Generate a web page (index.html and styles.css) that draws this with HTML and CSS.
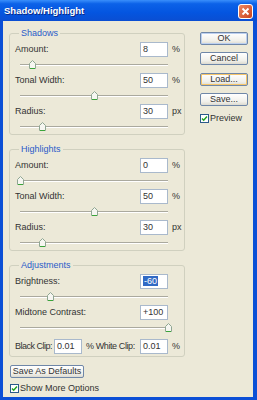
FILE: index.html
```html
<!DOCTYPE html>
<html lang="en">
<head>
    <meta charset="UTF-8">
    <title>Shadow/Highlight</title>
    <link rel="stylesheet" href="styles.css">
</head>
<body>
    <div class="window">
        <div class="titlebar">
            <span class="title">Shadow/Highlight</span>
            <span class="close">
                <svg width="15" height="15" viewBox="0 0 15 15">
                    <defs>
                        <linearGradient id="cg" x1="0" y1="0" x2="1" y2="1">
                            <stop offset="0" stop-color="#f08a62"/>
                            <stop offset="1" stop-color="#c8401c"/>
                        </linearGradient>
                    </defs>
                    <rect x="0.5" y="0.5" width="14" height="14" rx="2.5" fill="url(#cg)" stroke="#fff"/>
                    <path d="M4.5 4.5L10.5 10.5M10.5 4.5L4.5 10.5" stroke="#fff" stroke-width="1.8"/>
                </svg>
            </span>
        </div>

        <div class="dialog">
            <div class="main">
                <!-- Shadows -->
                <div class="group first">
                    <span class="group-title">Shadows</span>
                    <div class="row"><span class="label">Amount:</span><span class="field">8</span><span class="unit">%</span></div>
                    <div class="slider"><span class="track"></span><span class="thumb" style="left: 8%"><svg width="7" height="9" viewBox="0 0 7 9"><path d="M0.5 8.5V3.5L3.5 0.5L6.5 3.5V8.5Z" fill="#f6f6f1" stroke="#8fa692"/><path d="M1 8.5H6" stroke="#3aa53a"/></svg></span></div>
                    <div class="row"><span class="label">Tonal Width:</span><span class="field">50</span><span class="unit">%</span></div>
                    <div class="slider"><span class="track"></span><span class="thumb" style="left: 50%"><svg width="7" height="9" viewBox="0 0 7 9"><path d="M0.5 8.5V3.5L3.5 0.5L6.5 3.5V8.5Z" fill="#f6f6f1" stroke="#8fa692"/><path d="M1 8.5H6" stroke="#3aa53a"/></svg></span></div>
                    <div class="row"><span class="label">Radius:</span><span class="field">30</span><span class="unit">px</span></div>
                    <div class="slider"><span class="track"></span><span class="thumb" style="left: 15%"><svg width="7" height="9" viewBox="0 0 7 9"><path d="M0.5 8.5V3.5L3.5 0.5L6.5 3.5V8.5Z" fill="#f6f6f1" stroke="#8fa692"/><path d="M1 8.5H6" stroke="#3aa53a"/></svg></span></div>
                </div>

                <!-- Highlights -->
                <div class="group">
                    <span class="group-title">Highlights</span>
                    <div class="row"><span class="label">Amount:</span><span class="field">0</span><span class="unit">%</span></div>
                    <div class="slider"><span class="track"></span><span class="thumb" style="left: 0%"><svg width="7" height="9" viewBox="0 0 7 9"><path d="M0.5 8.5V3.5L3.5 0.5L6.5 3.5V8.5Z" fill="#f6f6f1" stroke="#8fa692"/><path d="M1 8.5H6" stroke="#3aa53a"/></svg></span></div>
                    <div class="row"><span class="label">Tonal Width:</span><span class="field">50</span><span class="unit">%</span></div>
                    <div class="slider"><span class="track"></span><span class="thumb" style="left: 50%"><svg width="7" height="9" viewBox="0 0 7 9"><path d="M0.5 8.5V3.5L3.5 0.5L6.5 3.5V8.5Z" fill="#f6f6f1" stroke="#8fa692"/><path d="M1 8.5H6" stroke="#3aa53a"/></svg></span></div>
                    <div class="row"><span class="label">Radius:</span><span class="field">30</span><span class="unit">px</span></div>
                    <div class="slider"><span class="track"></span><span class="thumb" style="left: 15%"><svg width="7" height="9" viewBox="0 0 7 9"><path d="M0.5 8.5V3.5L3.5 0.5L6.5 3.5V8.5Z" fill="#f6f6f1" stroke="#8fa692"/><path d="M1 8.5H6" stroke="#3aa53a"/></svg></span></div>
                </div>

                <!-- Adjustments -->
                <div class="group adjust">
                    <span class="group-title">Adjustments</span>
                    <div class="row"><span class="label">Brightness:</span><span class="field"><span class="selected">-60</span></span><span class="unit"></span></div>
                    <div class="slider"><span class="track"></span><span class="thumb" style="left: 20%"><svg width="7" height="9" viewBox="0 0 7 9"><path d="M0.5 8.5V3.5L3.5 0.5L6.5 3.5V8.5Z" fill="#f6f6f1" stroke="#8fa692"/><path d="M1 8.5H6" stroke="#3aa53a"/></svg></span></div>
                    <div class="row"><span class="label">Midtone Contrast:</span><span class="field">+100</span><span class="unit"></span></div>
                    <div class="slider"><span class="track"></span><span class="thumb" style="left: 100%"><svg width="7" height="9" viewBox="0 0 7 9"><path d="M0.5 8.5V3.5L3.5 0.5L6.5 3.5V8.5Z" fill="#f6f6f1" stroke="#8fa692"/><path d="M1 8.5H6" stroke="#3aa53a"/></svg></span></div>
                    <div class="row clip">
                        <span class="clip-label">Black Clip:</span><span class="field">0.01</span>
                        <span class="clip-mid">% White Clip:</span><span class="field">0.01</span><span class="unit">%</span>
                    </div>
                </div>

                <div class="btn defaults">Save As Defaults</div>
                <div class="check-row">
                    <span class="checkbox"><svg width="9" height="9" viewBox="0 0 9 9"><rect x="0.5" y="0.5" width="8" height="8" fill="#fff" stroke="#2b5a8a"/><path d="M2 4.5L3.7 6.2L7 2.6" fill="none" stroke="#21a121" stroke-width="1.5"/></svg></span>
                    <span>Show More Options</span>
                </div>
            </div>

            <div class="side">
                <div class="btn default">OK</div>
                <div class="btn cancel">Cancel</div>
                <div class="btn hot">Load...</div>
                <div class="btn">Save...</div>
                <div class="check-row preview">
                    <span class="checkbox"><svg width="9" height="9" viewBox="0 0 9 9"><rect x="0.5" y="0.5" width="8" height="8" fill="#fff" stroke="#2b5a8a"/><path d="M2 4.5L3.7 6.2L7 2.6" fill="none" stroke="#21a121" stroke-width="1.5"/></svg></span>
                    <span>Preview</span>
                </div>
            </div>
        </div>
    </div>
</body>
</html>
```

FILE: styles.css
```css
body {
    margin: 0;
    font-family: "Liberation Sans", Arial, sans-serif;
    font-size: 9px;
    color: #333;
}
.window {
    width: 257px;
    height: 400px;
    display: flex;
    flex-direction: column;
    background: #0b4fd6; /* XP blue frame */
}
.titlebar {
    height: 21px;
    flex: none;
    display: flex;
    align-items: center;
    justify-content: space-between;
    padding: 0 4px;
    background: linear-gradient(#3a8ffb 0%, #0c62e8 18%, #0455e0 60%, #0a4ed2 100%);
}
.title {
    color: #fff;
    font-weight: bold;
    font-size: 9.5px;
    text-shadow: 1px 1px 0 #0b2a86;
}
.close {
    display: flex;
    margin-top: 1px;
}
.dialog {
    flex: 1;
    display: flex;
    margin: 0 4px 3px 3px;
    background: #ece9d8; /* dialog face */
}
.main {
    width: 176px;
    margin-left: 6px;
}
.side {
    width: 48px;
    margin-left: 15px;
    padding-top: 11px;
}

/* group boxes */
.group {
    position: relative;
    border: 1px solid #d0d0bf;
    border-radius: 3px;
    padding: 7px 0 0 5px;
    margin-top: 14px;
}
.group.first {
    margin-top: 12px;
}
.group.adjust {
    padding-bottom: 2px;
}
.group-title {
    position: absolute;
    top: -6px;
    left: 9px;
    padding: 0 2px;
    line-height: 11px;
    background: #ece9d8;
    color: #2a5bc8;
}

.row {
    height: 16px;
    display: flex;
    align-items: center;
}
.label {
    flex: 1;
}
.field {
    width: 28px;
    height: 15px;
    box-sizing: border-box;
    border: 1px solid #a9b9cc;
    background: #fff;
    padding-left: 2px;
    line-height: 13px;
    white-space: nowrap;
}
.selected {
    background: #316ac5;
    color: #fff;
    padding: 0 1px;
}
.unit {
    width: 16px;
    padding-left: 4px;
    box-sizing: border-box;
}
.row.clip {
    margin-top: 3px;
}
.clip-label {
    width: 39px;
    letter-spacing: -0.5px;
    white-space: nowrap;
}
.clip-mid {
    width: 58px;
    padding-left: 4px;
    box-sizing: border-box;
    letter-spacing: -0.4px;
    white-space: nowrap;
}

/* sliders */
.slider {
    position: relative;
    height: 15px;
    margin: 0 16px 0 5px;
}
.track {
    position: absolute;
    left: 0;
    right: 0;
    top: 7px;
    height: 1px;
    background: #aaa99e;
    border-bottom: 1px solid #fff;
}
.thumb {
    position: absolute;
    top: 3px;
    width: 7px;
    height: 9px;
    margin-left: -3px;
    display: flex;
}

/* buttons */
.btn {
    height: 13px;
    box-sizing: border-box;
    border: 1px solid #6f87a8;
    border-radius: 2px;
    background: linear-gradient(#ffffff, #f1f0ea 70%, #dcdad0);
    text-align: center;
    line-height: 11px;
    margin-bottom: 7px;
}
.btn.default {
    box-shadow: inset 0 0 0 1px #bcd0f0;
}
.btn.cancel {
    margin-bottom: 8px;
}
.btn.hot {
    box-shadow: inset 0 0 0 1px #f5c56a;
}
.btn.defaults {
    width: 74px;
    margin: 8px 0 0 1px;
}
.check-row {
    display: flex;
    align-items: center;
    gap: 1px;
    height: 10px;
    margin: 5px 0 0 1px;
}
.check-row.preview {
    margin: 0;
}
.checkbox {
    display: flex;
}
```
